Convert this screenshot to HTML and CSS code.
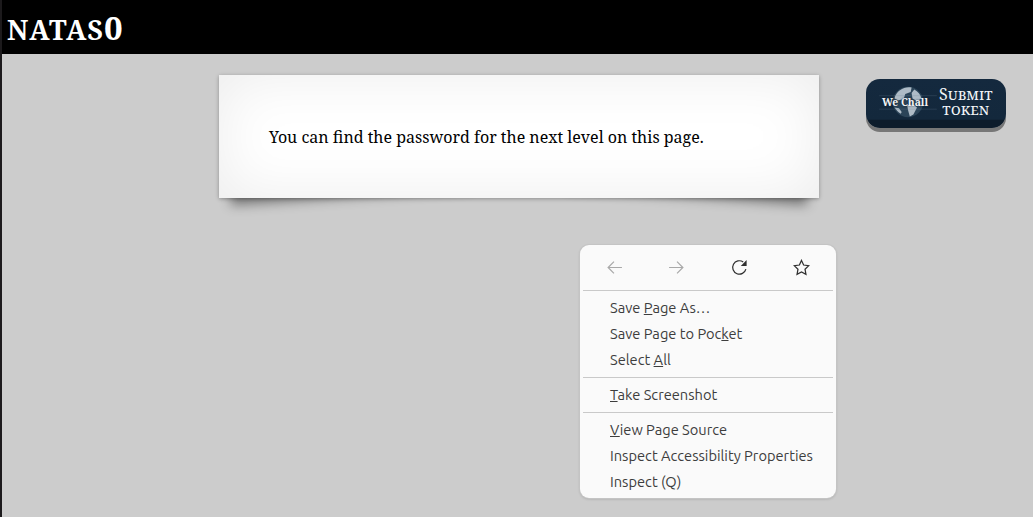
FILE: index.html
```html
<!DOCTYPE html>
<html lang="en">
<head>
    <meta charset="UTF-8">
    <title>natas0</title>
    <link rel="stylesheet" href="styles.css">
</head>
<body>
    <h1 class="banner"><span class="level">natas</span>0</h1>

    <main class="content">
        <div class="card">You can find the password for the next level on this page.</div>
    </main>

    <!-- WeChall submit button -->
    <a class="wechall" href="#">
        <span class="wechall-logo">
            <svg class="globe" viewBox="0 0 40 40" width="36" height="36">
                <circle cx="20" cy="20" r="17" fill="#2b4458"/>
                <path d="M11 7c4-3 9-4 13-3l-1 5-6 2-2 6-6 1-4-2c1-4 3-7 6-9zM27 6c4 2 7 6 8 10l-5 3-5-3-1-6zM19 23l7 0 4 3-4 8-4 2-2-7zM5 26l5 1 3 4-1 2c-3-2-5-4-7-7z" fill="#aebbc6"/>
                <path class="streak" d="M-12 13h64M-12 28h64"/>
            </svg>
            <span class="wechall-name">We Chall</span>
        </span>
        <span class="wechall-text">
            <span class="wechall-line">Submit</span>
            <span class="wechall-line">token</span>
        </span>
    </a>

    <!-- Browser context menu -->
    <div class="menu">
        <div class="menu-nav">
            <svg class="nav-icon off" viewBox="0 0 16 16"><path d="M15 8H2M7.500 2.500 2 8l5.500 5.500"/></svg>
            <svg class="nav-icon off" viewBox="0 0 16 16"><path d="M1 8h13M8.500 2.500 14 8l-5.500 5.500"/></svg>
            <svg class="nav-icon" viewBox="0 0 16 16"><path d="M14 9.500A6.300 6.300 0 1 1 11.500 2.800"/><path class="solid" d="M14.700 1v5.500H9.200z"/></svg>
            <svg class="nav-icon" viewBox="0 0 16 16"><path d="M8 1.300l2 4.400 4.800.6-3.500 3.300.9 4.800L8 12.100l-4.200 2.300.9-4.800L1.200 6.300 6 5.700z"/></svg>
        </div>
        <div class="menu-group">
            <div class="menu-item">Save <u>P</u>age As…</div>
            <div class="menu-item">Save Page to Poc<u>k</u>et</div>
            <div class="menu-item">Select <u>A</u>ll</div>
        </div>
        <div class="menu-group">
            <div class="menu-item"><u>T</u>ake Screenshot</div>
        </div>
        <div class="menu-group">
            <div class="menu-item"><u>V</u>iew Page Source</div>
            <div class="menu-item">Inspect Accessibility Properties</div>
            <div class="menu-item">Inspect (Q)</div>
        </div>
    </div>
</body>
</html>
```

FILE: styles.css
```css
html, body { height: 100%; }
body { margin: 0; background: #ccc; border-left: 2px solid #1c1a1c; font-family: "Noto Serif", "DejaVu Serif", serif; overflow: hidden; box-sizing: border-box; }

.banner { margin: 0 0 0 -2px; height: 54px; box-sizing: border-box; padding: 6px 0 0 7px; background: #000; color: #fff; font-size: 33px; line-height: 44px; font-weight: bold; }
.level { font-size: 27px; letter-spacing: 1px; text-transform: uppercase; }

.content { padding-top: 21px; padding-left: 217px; }
.card { position: relative; box-sizing: border-box; width: 600px; height: 123px; padding: 50px; background: #fff; color: #000; font-size: 16px; line-height: 24px; box-shadow: 0 1px 4px rgba(0,0,0,.3), inset 0 0 60px rgba(0,0,0,.08); }
.card::before, .card::after { content: ""; position: absolute; z-index: -1; bottom: 16px; width: 40%; height: 20%; box-shadow: 0 15px 12px rgba(0,0,0,.42); }
.card::before { left: 10px; transform: rotate(-4deg); }
.card::after { right: 10px; transform: rotate(4deg); }

.wechall { position: absolute; left: 866px; top: 79px; width: 140px; height: 49px; display: flex; align-items: center; gap: 8px; box-sizing: border-box; padding: 0 12px 3px 19px; border-radius: 14px; background: linear-gradient(#14293e, #13283c 82%, #0d1c2b 84%); box-shadow: 0 4px 0 #777; color: #f1f5f8; text-decoration: none; }
.wechall-logo { position: relative; width: 46px; height: 36px; display: flex; justify-content: center; align-items: center; }
.globe { overflow: visible; }
.streak { stroke: #6d8598; stroke-width: .5; opacity: .5; }
.wechall-name { position: absolute; left: -3px; right: 3px; top: 11px; text-align: center; font-size: 10.300px; font-weight: bold; line-height: 14px; white-space: nowrap; color: #f4f4f4; text-shadow: 0 0 2px #13283c; }
.wechall-text { text-align: center; font-size: 16px; font-variant: small-caps; white-space: nowrap; }
.wechall-line { display: block; height: 15px; line-height: 15px; }

.menu { position: absolute; left: 580px; top: 245px; width: 256px; height: 253px; box-sizing: border-box; padding: 0 3px; background: #fafafa; border-radius: 9px; box-shadow: 0 0 0 1px #c4c4c4, 0 1px 3px rgba(0,0,0,.2); font-family: "Ubuntu", "Noto Sans", sans-serif; font-size: 14.650px; color: #3d3d3d; }
.menu-nav { height: 45px; display: flex; justify-content: space-between; align-items: center; padding: 0 23px 1px; box-sizing: border-box; }
.nav-icon { width: 17px; height: 17px; fill: none; stroke: #2f2f2f; stroke-width: 1.150; }
.nav-icon.off { stroke: #a9a9a9; }
.nav-icon .solid { fill: #2f2f2f; stroke: none; }
.menu-group { border-top: 1px solid #c9c9c9; padding: 4px 0; }
.menu-item { height: 26px; line-height: 26px; padding-left: 27px; white-space: nowrap; }
```
